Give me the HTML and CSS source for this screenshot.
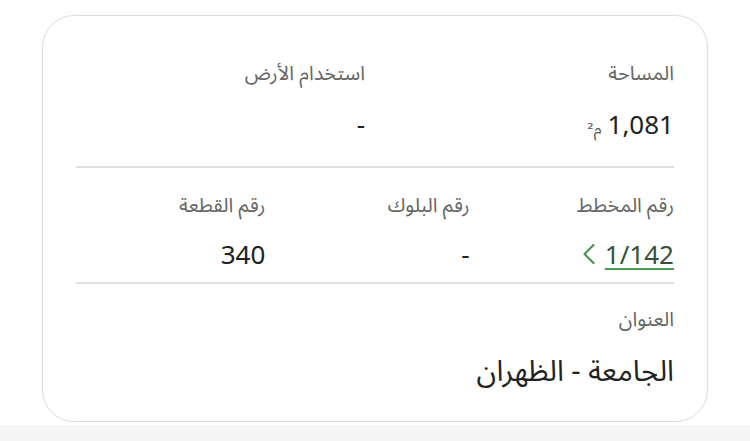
FILE: index.html
```html
<!DOCTYPE html>
<html lang="ar" dir="rtl">
<head>
<meta charset="utf-8">
<link rel="stylesheet" href="styles.css">
</head>
<body>
<div class="page">
  <div class="card">
    <div class="row row-2">
      <div class="field">
        <div class="label">المساحة</div>
        <div class="value"><span class="num">1,081</span> <span class="unit">م²</span></div>
      </div>
      <div class="field">
        <div class="label">استخدام الأرض</div>
        <div class="value"><span class="num">-</span></div>
      </div>
    </div>
    <div class="divider divider-1"></div>
    <div class="row row-3">
      <div class="field">
        <div class="label">رقم المخطط</div>
        <div class="value link"><span class="num link-text">1/142</span><svg class="chev" width="12" height="22" viewBox="0 0 12 22"><polyline points="10.5,2 1.5,11 10.5,20" fill="none" stroke="#3f8f46" stroke-width="2" stroke-linecap="round" stroke-linejoin="round"/></svg></div>
      </div>
      <div class="field">
        <div class="label">رقم البلوك</div>
        <div class="value"><span class="num">-</span></div>
      </div>
      <div class="field">
        <div class="label">رقم القطعة</div>
        <div class="value"><span class="num">340</span></div>
      </div>
    </div>
    <div class="divider divider-2"></div>
    <div class="row">
      <div class="field">
        <div class="label label-tight">العنوان</div>
        <div class="address">الجامعة - الظهران</div>
      </div>
    </div>
  </div>
  <div class="footer-strip"></div>
</div>
</body>
</html>
```
FILE: styles.css
```css
html, body {
  margin: 0;
  padding: 0;
  background: #ffffff;
}
body {
  font-family: "Noto Sans Arabic", "DejaVu Sans", sans-serif;
  color: #222;
  width: 750px;
  height: 441px;
  overflow: hidden;
}
.page {
  display: flex;
  flex-direction: column;
  padding-top: 15px;
}
.card {
  box-sizing: border-box;
  margin-right: 42px;
  width: 666px;
  height: 407px;
  border: 1.5px solid #dcdcdc;
  border-radius: 32px;
  background: #fff;
  padding: 41px 33px 0 33px;
}
.row {
  display: grid;
}
.row-2 {
  grid-template-columns: 1fr 1fr;
  column-gap: 20px;
}
.row-3 {
  grid-template-columns: 1fr 1fr 1fr;
  column-gap: 15px;
}
.field {
  display: flex;
  flex-direction: column;
  align-items: flex-start;
}
.label {
  font-size: 20px;
  line-height: 34px;
  color: #666666;
}
.label-tight {
  margin-top: -2px;
}
.value {
  display: flex;
  align-items: baseline;
  gap: 6px;
  margin-top: 15px;
  line-height: 36px;
  height: 36px;
}
.row-3 .value {
  margin-top: 13px;
}
.num {
  font-family: "Noto Sans", "Open Sans", sans-serif;
  font-size: 26px;
  color: #222;
}
.unit {
  font-size: 16px;
  color: #555;
}
.link {
  align-items: center;
  gap: 10px;
}
.link-text {
  color: #36503b;
  text-decoration: underline;
  text-decoration-color: #4f9a57;
  text-decoration-thickness: 2px;
  text-underline-offset: 4px;
}
.chev {
  display: block;
}
.divider {
  height: 2px;
  background: #e0e0e0;
}
.divider-1 {
  margin: 24px 0 21px;
}
.divider-2 {
  margin: 10px 0 21px;
}
.address {
  margin-top: 10px;
  font-size: 29px;
  line-height: 50px;
  color: #222;
}
.footer-strip {
  margin-top: 3px;
  height: 16px;
  background: #f5f5f6;
}
```
